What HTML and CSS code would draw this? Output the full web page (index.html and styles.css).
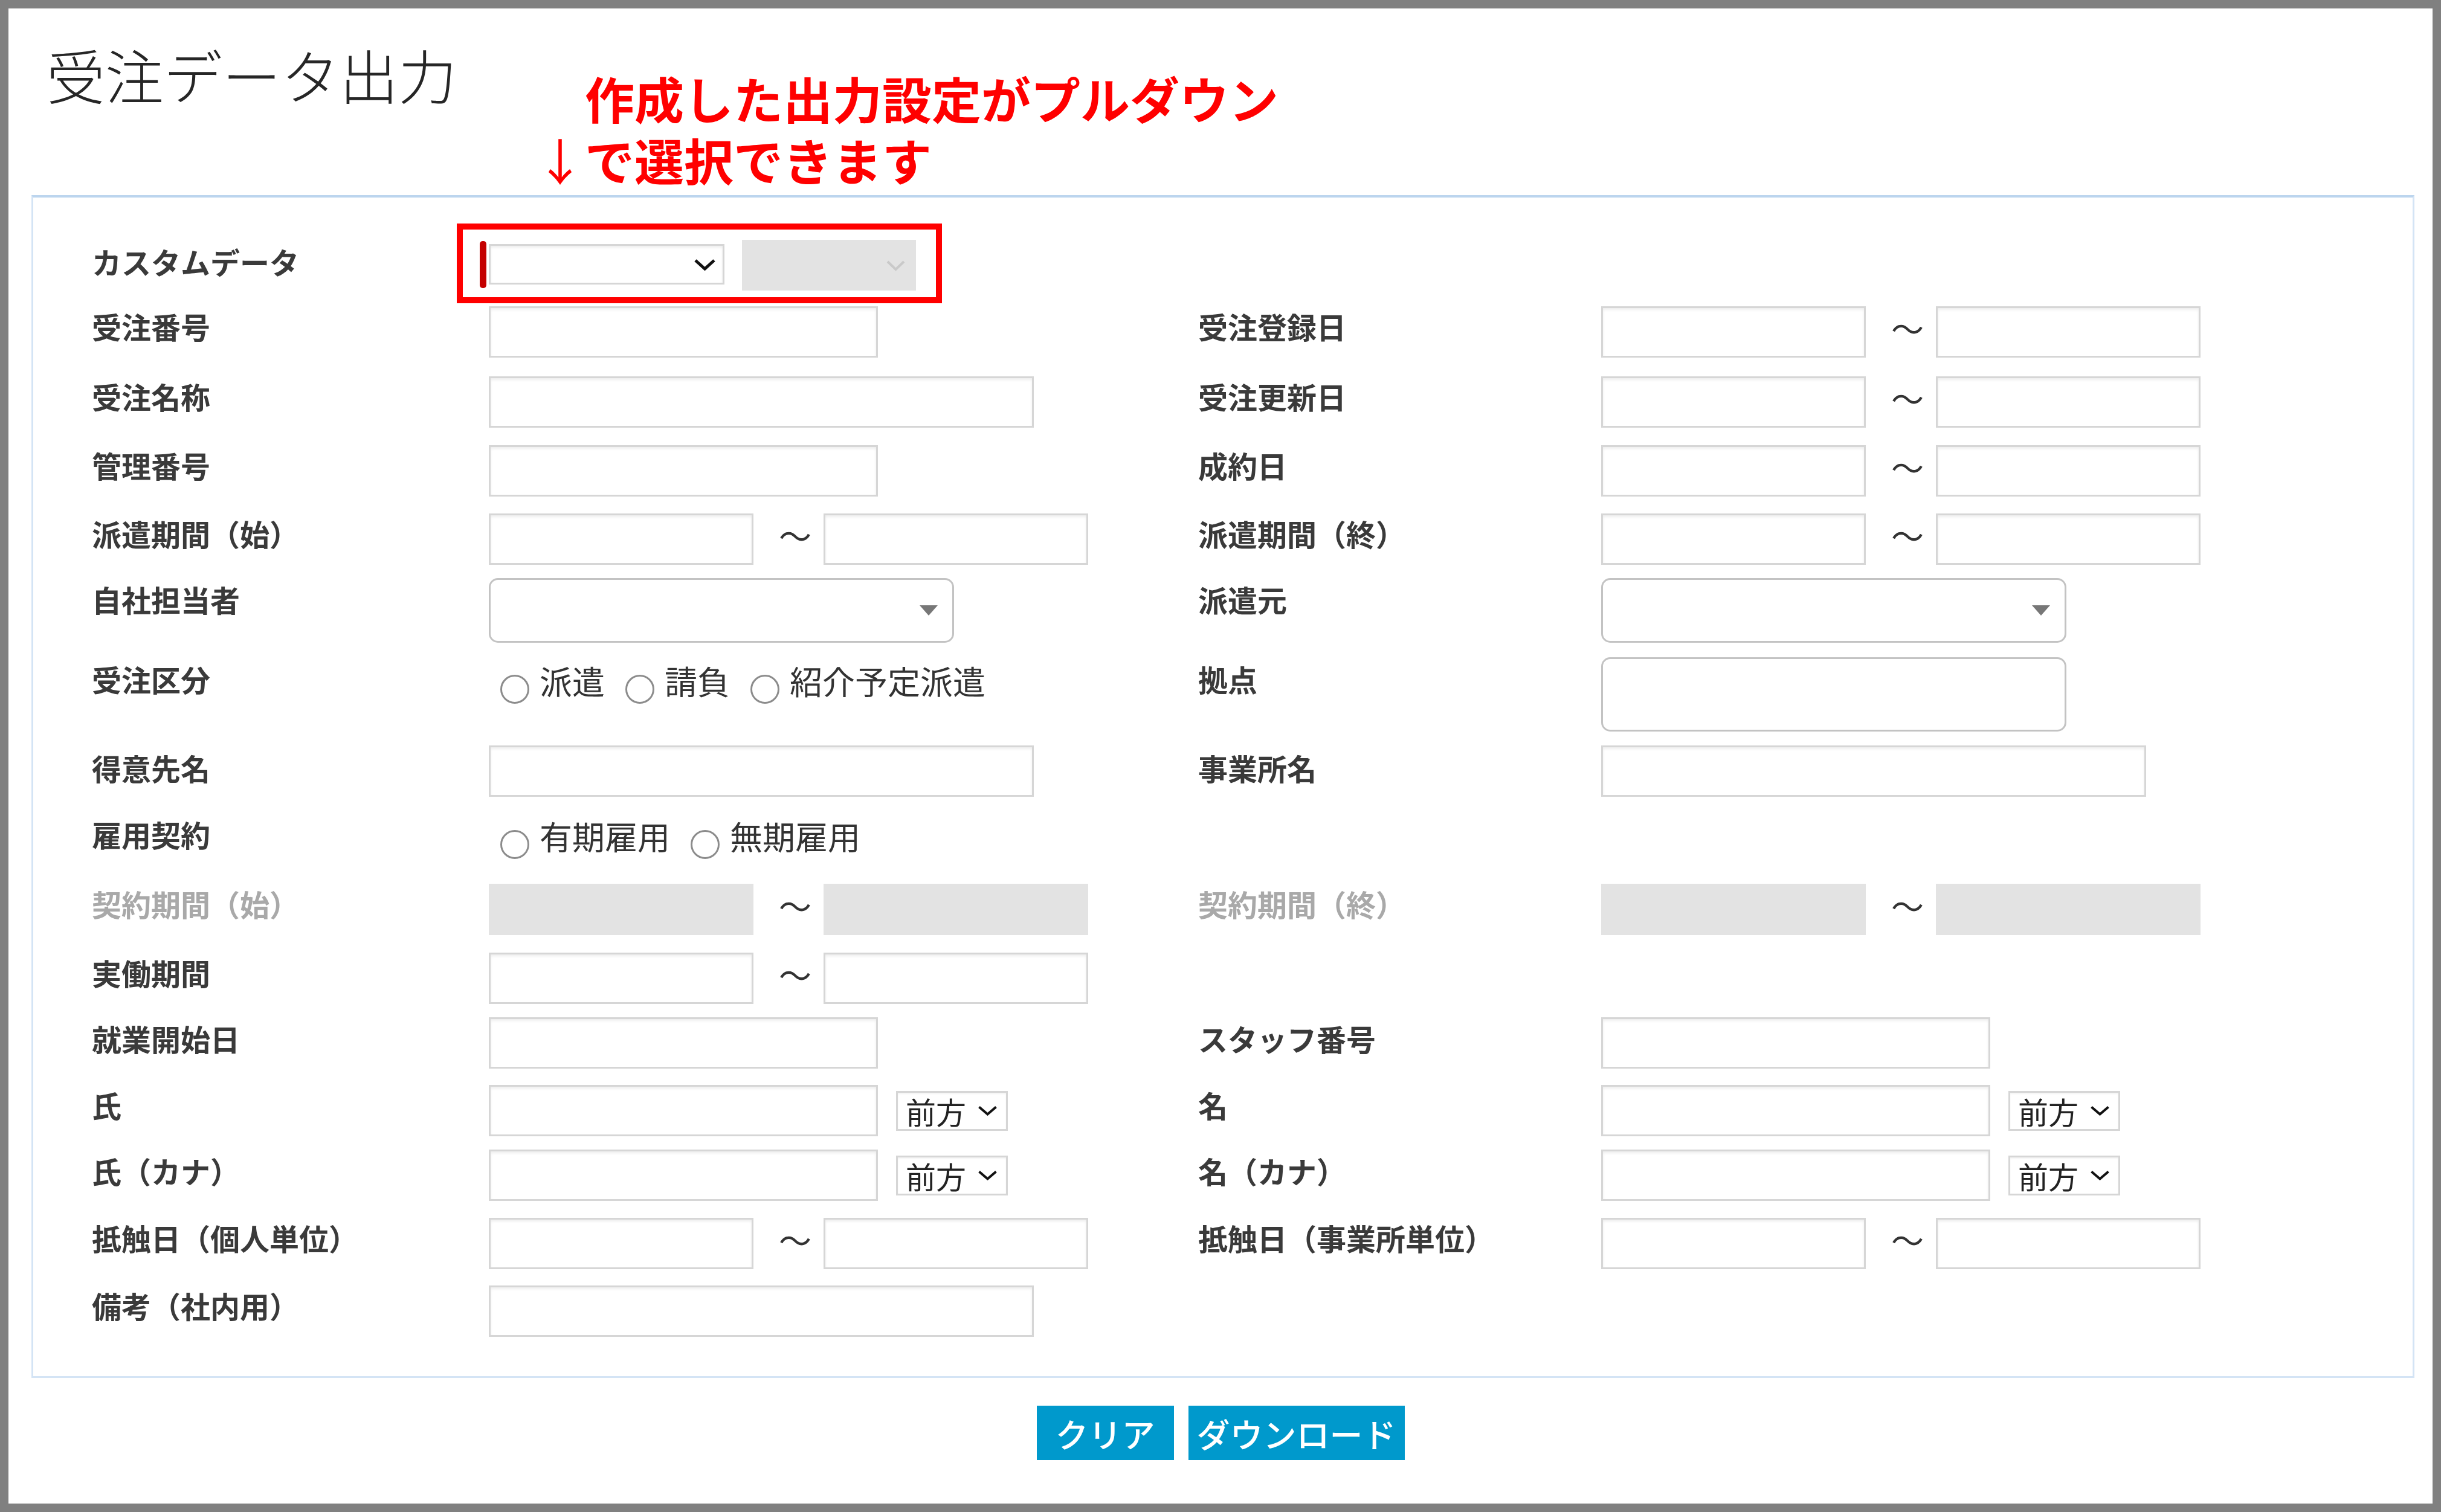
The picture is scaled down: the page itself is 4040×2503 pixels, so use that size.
FILE: index.html
```html
<!DOCTYPE html>
<html lang="ja">
<head>
<meta charset="utf-8">
<title>受注データ出力</title>
<link rel="stylesheet" href="styles.css">
</head>
<body>
<div class="frame">
  <header class="head">
    <h1 class="title">受注データ出力</h1>
    <div class="note">
      <div class="note-l1">作成した出力設定がプルダウン</div>
      <div class="note-l2"><span class="arrow">↓</span>で選択できます</div>
    </div>
  </header>

  <section class="panel">
    <div class="form">
      <!-- row 1 -->
      <div class="lbl r-pad3">カスタムデータ</div>
      <div class="fld">
        <div class="custom">
          <span class="req"></span>
          <div class="csel">
            <svg class="chev" width="37" height="20" viewBox="0 0 37 20"><path d="M3 3 L18.5 17 L34 3" fill="none" stroke="#111" stroke-width="5"/></svg>
          </div>
          <div class="csel csel-dis">
            <svg class="chev" width="33" height="19" viewBox="0 0 33 19"><path d="M3 3 L16.5 16 L30 3" fill="none" stroke="#c9c9c9" stroke-width="4"/></svg>
          </div>
          <div class="hl"></div>
        </div>
      </div>
      <div></div><div></div>

      <!-- row 2 -->
      <div class="lbl">受注番号</div>
      <div class="fld"><input class="in w-s" type="text"></div>
      <div class="lbl">受注登録日</div>
      <div class="fld"><input class="in w-d" type="text"><span class="tilde">～</span><input class="in w-d" type="text"></div>

      <!-- row 3 -->
      <div class="lbl">受注名称</div>
      <div class="fld"><input class="in w-l" type="text"></div>
      <div class="lbl">受注更新日</div>
      <div class="fld"><input class="in w-d" type="text"><span class="tilde">～</span><input class="in w-d" type="text"></div>

      <!-- row 4 -->
      <div class="lbl">管理番号</div>
      <div class="fld"><input class="in w-s" type="text"></div>
      <div class="lbl">成約日</div>
      <div class="fld"><input class="in w-d" type="text"><span class="tilde">～</span><input class="in w-d" type="text"></div>

      <!-- row 5 -->
      <div class="lbl">派遣期間（始）</div>
      <div class="fld"><input class="in w-d" type="text"><span class="tilde">～</span><input class="in w-d" type="text"></div>
      <div class="lbl">派遣期間（終）</div>
      <div class="fld"><input class="in w-d" type="text"><span class="tilde">～</span><input class="in w-d" type="text"></div>

      <!-- row 6 -->
      <div class="lbl r-pad2">自社担当者</div>
      <div class="fld"><div class="rsel"><svg width="30" height="17" viewBox="0 0 30 17"><path d="M0 0 H30 L15 17 Z" fill="#777"/></svg></div></div>
      <div class="lbl r-pad2">派遣元</div>
      <div class="fld"><div class="rsel"><svg width="30" height="17" viewBox="0 0 30 17"><path d="M0 0 H30 L15 17 Z" fill="#777"/></svg></div></div>

      <!-- row 7 -->
      <div class="lbl r-pad3">受注区分</div>
      <div class="fld">
        <div class="radios r-pad3">
          <span class="ri"><span class="rc"></span><span class="rt">派遣</span></span>
          <span class="ri"><span class="rc"></span><span class="rt">請負</span></span>
          <span class="ri"><span class="rc"></span><span class="rt">紹介予定派遣</span></span>
        </div>
      </div>
      <div class="lbl r-pad3">拠点</div>
      <div class="fld"><div class="kyoten"></div></div>

      <!-- row 8 -->
      <div class="lbl r-pad4">得意先名</div>
      <div class="fld"><input class="in w-l" type="text"></div>
      <div class="lbl r-pad4">事業所名</div>
      <div class="fld"><input class="in w-l" type="text"></div>

      <!-- row 9 -->
      <div class="lbl">雇用契約</div>
      <div class="fld">
        <div class="radios">
          <span class="ri"><span class="rc"></span><span class="rt">有期雇用</span></span>
          <span class="ri"><span class="rc"></span><span class="rt">無期雇用</span></span>
        </div>
      </div>
      <div></div><div></div>

      <!-- row 10 -->
      <div class="lbl dis">契約期間（始）</div>
      <div class="fld"><input class="in w-d in-dis" type="text" disabled><span class="tilde">～</span><input class="in w-d in-dis" type="text" disabled></div>
      <div class="lbl dis">契約期間（終）</div>
      <div class="fld"><input class="in w-d in-dis" type="text" disabled><span class="tilde">～</span><input class="in w-d in-dis" type="text" disabled></div>

      <!-- row 11 -->
      <div class="lbl">実働期間</div>
      <div class="fld"><input class="in w-d" type="text"><span class="tilde">～</span><input class="in w-d" type="text"></div>
      <div></div><div></div>

      <!-- row 12 -->
      <div class="lbl r-pad2">就業開始日</div>
      <div class="fld"><input class="in w-s" type="text"></div>
      <div class="lbl r-pad2">スタッフ番号</div>
      <div class="fld"><input class="in w-s" type="text"></div>

      <!-- row 13 -->
      <div class="lbl">氏</div>
      <div class="fld fld-c"><input class="in w-s" type="text"><div class="fsel"><span>前方</span><svg width="33" height="17" viewBox="0 0 33 17"><path d="M2.5 2.5 L16.5 14.5 L30.5 2.5" fill="none" stroke="#111" stroke-width="4"/></svg></div></div>
      <div class="lbl">名</div>
      <div class="fld fld-c"><input class="in w-s" type="text"><div class="fsel"><span>前方</span><svg width="33" height="17" viewBox="0 0 33 17"><path d="M2.5 2.5 L16.5 14.5 L30.5 2.5" fill="none" stroke="#111" stroke-width="4"/></svg></div></div>

      <!-- row 14 -->
      <div class="lbl r-pad2">氏（カナ）</div>
      <div class="fld fld-c"><input class="in w-s" type="text"><div class="fsel"><span>前方</span><svg width="33" height="17" viewBox="0 0 33 17"><path d="M2.5 2.5 L16.5 14.5 L30.5 2.5" fill="none" stroke="#111" stroke-width="4"/></svg></div></div>
      <div class="lbl r-pad2">名（カナ）</div>
      <div class="fld fld-c"><input class="in w-s" type="text"><div class="fsel"><span>前方</span><svg width="33" height="17" viewBox="0 0 33 17"><path d="M2.5 2.5 L16.5 14.5 L30.5 2.5" fill="none" stroke="#111" stroke-width="4"/></svg></div></div>

      <!-- row 15 -->
      <div class="lbl">抵触日（個人単位）</div>
      <div class="fld"><input class="in w-d" type="text"><span class="tilde">～</span><input class="in w-d" type="text"></div>
      <div class="lbl">抵触日（事業所単位）</div>
      <div class="fld"><input class="in w-d" type="text"><span class="tilde">～</span><input class="in w-d" type="text"></div>

      <!-- row 16 -->
      <div class="lbl">備考（社内用）</div>
      <div class="fld"><input class="in w-l" type="text"></div>
      <div></div><div></div>
    </div>
  </section>

  <div class="actions">
    <button class="btn btn-clear" type="button">クリア</button>
    <button class="btn btn-dl" type="button">ダウンロード</button>
  </div>
</div>
</body>
</html>
```

FILE: styles.css
```css
html, body {
  margin: 0;
  padding: 0;
  background: #fff;
}

.frame {
  box-sizing: border-box;
  width: 4040px;
  height: 2503px;
  border: 14px solid #808080;
  background: #fff;
  font-family: "Noto Sans CJK JP", "Noto Sans", sans-serif;
  color: #333;
}

/* header */
.head {
  display: flex;
  align-items: flex-start;
  height: 309px;
}

.title {
  margin: 59px 0 0 63px;
  font-size: 97px;
  line-height: 97px;
  font-weight: 300;
  color: #262626;
  white-space: nowrap;
}

.note {
  margin: 97px 0 0 130px;
  font-size: 82px;
  line-height: 102px;
  font-weight: 700;
  color: #ff0000;
  white-space: nowrap;
}

.note-l1 {
  padding-left: 82px;
}

.arrow {
  display: inline-block;
  width: 82px;
  text-align: center;
  font-weight: 400;
}

/* panel */
.panel {
  margin: 0 30px 0 38px;
  border: 3px solid #d4e4f5;
  border-top: 4px solid #bcd5ee;
  padding: 70px 0 65px 97px;
}

.form {
  display: grid;
  grid-template-columns: 657px 1174px 667px 1fr;
  grid-template-rows: 110px 116px 114px 113px 107px 131px 146px 114px 115px 114px 107px 112px 107px 113px 112px 85px;
}

.lbl {
  font-size: 49px;
  line-height: 66px;
  font-weight: 700;
  color: #3a3a3a;
  white-space: nowrap;
}

.lbl.dis {
  color: #a9a9a9;
}

.r-pad2 { padding-top: 2px; }
.r-pad3 { padding-top: 3px; }
.r-pad4 { padding-top: 4px; }

.fld {
  display: flex;
  align-items: flex-start;
}

.fld-c {
  align-items: center;
  height: 85px;
}

/* text inputs */
.in {
  box-sizing: border-box;
  height: 85px;
  margin: 0;
  padding: 0;
  border: 3px solid #d6d6d6;
  background: #fff;
  box-shadow: inset 0 3px 4px rgba(0, 0, 0, 0.07);
  outline: none;
}

.w-s { width: 644px; }
.w-l { width: 902px; }
.w-d { width: 438px; }

.in-dis {
  background: #e3e3e3;
  border-color: #e3e3e3;
  box-shadow: none;
}

.tilde {
  box-sizing: border-box;
  width: 116px;
  padding-left: 42px;
  font-size: 54px;
  line-height: 72px;
  color: #333;
}

/* custom data selects */
.custom {
  position: relative;
  display: flex;
  align-items: flex-start;
}

.req {
  width: 11px;
  height: 78px;
  margin: 2px 4px 0 -15px;
  background: #c40000;
  border-radius: 5px;
}

.csel {
  box-sizing: border-box;
  width: 390px;
  height: 67px;
  margin-top: 7px;
  border: 3px solid #d6d6d6;
  box-shadow: inset 0 3px 4px rgba(0, 0, 0, 0.07);
  display: flex;
  align-items: center;
  justify-content: flex-end;
  padding-right: 11px;
  background: #fff;
}

.csel-dis {
  width: 288px;
  height: 84px;
  margin-top: 0;
  margin-left: 29px;
  background: #e3e3e3;
  border-color: #e3e3e3;
  box-shadow: none;
  padding-right: 14px;
}

.hl {
  position: absolute;
  left: -53px;
  top: -27px;
  width: 803px;
  height: 132px;
  box-sizing: border-box;
  border: 10px solid #ff0000;
  pointer-events: none;
}

/* rounded selects */
.rsel {
  box-sizing: border-box;
  width: 770px;
  height: 107px;
  border: 3px solid #c3c3c3;
  border-radius: 15px;
  display: flex;
  align-items: center;
  justify-content: flex-end;
  padding-right: 24px;
  background: #fff;
}

.kyoten {
  box-sizing: border-box;
  width: 770px;
  height: 123px;
  border: 3px solid #c3c3c3;
  border-radius: 15px;
  background: #fff;
}

/* radios */
.radios {
  display: flex;
  padding-left: 19px;
}

.ri {
  display: flex;
  align-items: flex-start;
  margin-right: 34px;
}

.rc {
  box-sizing: border-box;
  width: 48px;
  height: 48px;
  margin-top: 26px;
  margin-right: 17px;
  border: 3px solid #8c8c8c;
  border-radius: 50%;
  background: #fff;
}

.rt {
  font-size: 54px;
  line-height: 72px;
  color: #333;
  white-space: nowrap;
}

/* small select 前方 */
.fsel {
  box-sizing: border-box;
  width: 185px;
  height: 66px;
  margin-left: 30px;
  border: 3px solid #d6d6d6;
  box-shadow: inset 0 2px 3px rgba(0, 0, 0, 0.05);
  display: flex;
  align-items: center;
  padding-left: 13px;
  padding-right: 14px;
  background: #fff;
  font-size: 50px;
  line-height: 60px;
  color: #222;
}

.fsel svg {
  margin-left: auto;
}

/* buttons */
.actions {
  display: flex;
  justify-content: center;
  gap: 24px;
  margin-top: 46px;
}

.btn {
  height: 90px;
  border: 0;
  margin: 0;
  padding: 0;
  background: #0099cc;
  color: #fff;
  font-family: "Noto Sans CJK JP", sans-serif;
  font-size: 55px;
  line-height: 90px;
  font-weight: 500;
}

.btn-clear { width: 227px; }
.btn-dl { width: 358px; }
```
